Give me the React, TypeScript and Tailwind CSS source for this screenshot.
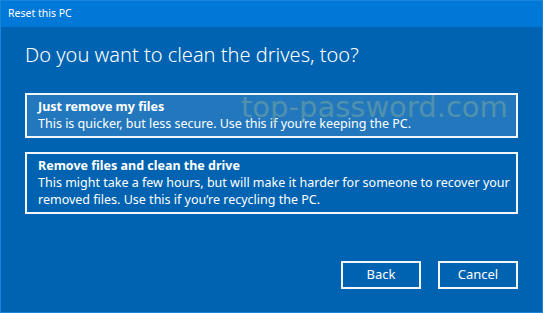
import React, { useState } from "react";

const OPTIONS = [
  {
    title: "Just remove my files",
    desc: "This is quicker, but less secure. Use this if you’re keeping the PC.",
  },
  {
    title: "Remove files and clean the drive",
    desc: "This might take a few hours, but will make it harder for someone to recover your removed files. Use this if you’re recycling the PC.",
  },
];

export default function App() {
  const [hover, setHover] = useState(0);

  return (
    <div
      className="w-[543px] h-[313px] flex flex-col border border-[#1a84d8] bg-[#0063b1] text-white overflow-hidden"
      style={{ fontFamily: '"Segoe UI", "Noto Sans", "Open Sans", sans-serif' }}
    >
      {/* Title bar */}
      <div className="h-[26px] shrink-0 bg-[#0078d7] flex items-center pl-[7px] text-[10.5px]">
        Reset this PC
      </div>

      <div className="flex-1 flex flex-col pl-[24px] pr-[24px]">
        <h1 className="mt-[14px] text-[20px] font-light leading-[28px]">
          Do you want to clean the drives, too?
        </h1>

        <div className="mt-[24px] flex flex-col gap-[14px]">
          {OPTIONS.map((o, i) => (
            <div
              key={o.title}
              onMouseEnter={() => setHover(i)}
              className={
                "relative border-2 border-[#f2f6fa] pl-[11px] pr-[6px] pt-[3px] pb-[4px] text-[12.5px] leading-[17px] " +
                (hover === i ? "bg-[#2378bd]" : "bg-[#0063b1]")
              }
            >
              <div className="font-bold">{o.title}</div>
              <div>{o.desc}</div>
              {i === 0 && (
                <div
                  className="absolute left-[214px] top-[-6px] text-[29px] leading-[36px] text-[#6fa2a4] opacity-60 pointer-events-none"
                  style={{ fontFamily: '"DejaVu Sans", sans-serif' }}
                >
                  top-password.com
                </div>
              )}
            </div>
          ))}
        </div>

        <div className="mt-auto mb-[23px] flex justify-end gap-[17px]">
          {["Back", "Cancel"].map((b) => (
            <button
              key={b}
              className="w-[80px] h-[28px] border-2 border-[#f2f6fa] bg-[#0063b1] text-[13px] text-white"
            >
              {b}
            </button>
          ))}
        </div>
      </div>
    </div>
  );
}
